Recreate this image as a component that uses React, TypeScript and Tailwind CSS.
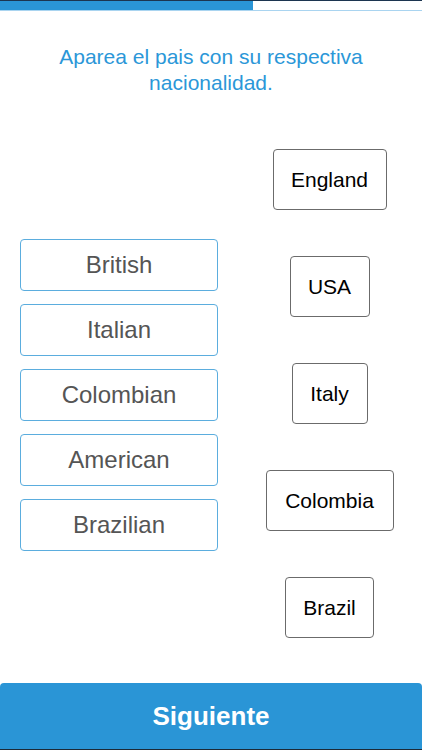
import React from "react";

const left = ["British", "Italian", "Colombian", "American", "Brazilian"];
const right: { t: string; w: string }[] = [
  { t: "England", w: "w-[114px]" },
  { t: "USA", w: "w-[80px]" },
  { t: "Italy", w: "w-[76px]" },
  { t: "Colombia", w: "w-[128px]" },
  { t: "Brazil", w: "w-[89px]" },
];

export default function App() {
  return (
    <div
      className="w-[422px] h-[750px] bg-white flex flex-col overflow-hidden"
      style={{ fontFamily: '"Liberation Sans", Arial, sans-serif' }}
    >
      <div className="h-[11px] border-t border-[#1c3550] border-b border-b-[#a9d4f0] flex">
        <div className="w-[253px] bg-[#2a95d6]" />
      </div>
      <p className="mt-[33px] text-center text-[21px] leading-[26px] text-[#2b97d8] px-6">
        Aparea el pais con su respectiva
        <br />
        nacionalidad.
      </p>
      <div className="mt-[53px] flex">
        <div className="ml-[20px] w-[198px] pt-[90px] flex flex-col gap-[13px]">
          {left.map((l) => (
            <div
              key={l}
              className="h-[52px] rounded-[4px] border-[1.5px] border-[#5badde] flex items-center justify-center text-[24px] text-[#555555]"
            >
              {l}
            </div>
          ))}
        </div>
        <div className="ml-[19px] flex-1 flex flex-col items-center gap-[46px]">
          {right.map((r) => (
            <div
              key={r.t}
              className={`${r.w} h-[61px] rounded-[4px] border border-[#6b6b6b] flex items-center justify-center text-[21px] text-black`}
            >
              {r.t}
            </div>
          ))}
        </div>
      </div>
      <div className="mt-auto h-[67px] border-b border-[#1c2a38] bg-[#2a95d6] rounded-t-[4px] flex items-center justify-center text-white text-[26px] font-bold">
        Siguiente
      </div>
    </div>
  );
}
